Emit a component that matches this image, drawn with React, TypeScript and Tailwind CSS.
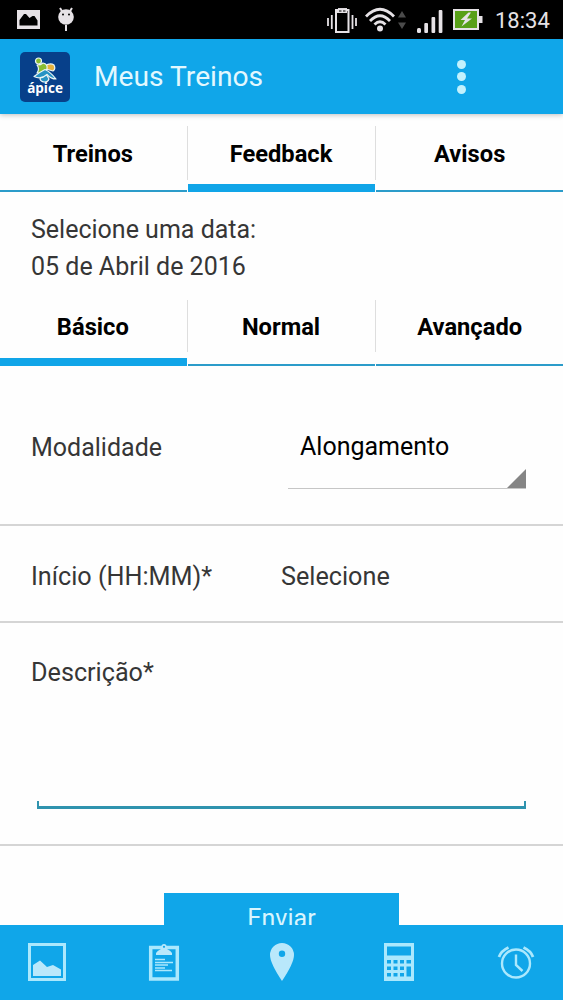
import { clsx } from "clsx";

const mainTabs = ["Treinos", "Feedback", "Avisos"];
const levelTabs = ["Básico", "Normal", "Avançado"];

const StatusBar = () => (
  <div className="flex h-[39px] shrink-0 items-center bg-black pl-[17px] text-[#e6e2e6]">
    <svg width="23" height="19" viewBox="0 0 23 19">
      <path fill="currentColor" fillRule="evenodd" d="M0 0h23v19H0zM2.500 15.500h18v-5l-3-4.500h-2l-3 2-3.500-4H7l-4.500 6z" />
    </svg>
    <svg className="ml-[17px]" width="18" height="25" viewBox="0 0 18 25">
      <circle cx="9" cy="10" r="7.800" fill="currentColor" />
      <path d="M3 1l2.500 4M15 1l-2.500 4M9 18v6" stroke="currentColor" strokeWidth="2" />
      <circle cx="6" cy="7.500" r="1" fill="#000" />
      <circle cx="12" cy="7.500" r="1" fill="#000" />
    </svg>
    <svg className="ml-auto mt-[2px]" width="30" height="26" viewBox="0 0 30 26" fill="none" stroke="currentColor">
      <rect x="9" y="2" width="12.500" height="22" strokeWidth="2" />
      <path d="M11 0.800h9" strokeWidth="1.500" />
      <path d="M10 3.500h10" strokeWidth="3" />
      <path d="M12 3h2.500M16 3h2.500" stroke="#000" strokeWidth="1" />
      <path d="M1 10v8M4.800 7v14M25.500 7v14M29 10v8" strokeWidth="1.800" />
    </svg>
    <svg className="ml-[8px]" width="30" height="26" viewBox="0 0 30 26" fill="none" stroke="currentColor" strokeWidth="2.800">
      <path d="M1 9.500Q15-5 29 9.500M5 14Q15 3.500 25 14M9.500 17.500Q15 12 20.500 17.500" />
      <circle cx="15" cy="21.500" r="3" fill="currentColor" stroke="none" />
    </svg>
    <svg className="ml-[3px]" width="8" height="18" viewBox="0 0 8 18" fill="#4b4b4b">
      <path d="M4 0l4 6.500H0zM0 11.500h8L4 18z" />
    </svg>
    <svg className="ml-[11px] mt-[3px]" width="26" height="23" viewBox="0 0 26 23" fill="currentColor">
      <rect x="0" y="18" width="4" height="5" rx="1.500" />
      <rect x="7.300" y="13" width="3.700" height="10" rx="1" />
      <rect x="14.500" y="7" width="3.700" height="16" rx="1" />
      <rect x="21.700" y="0" width="3.700" height="23" rx="1" />
    </svg>
    <svg className="ml-[10px]" width="30" height="21" viewBox="0 0 30 21">
      <rect x="1" y="1" width="24" height="19" fill="#58a018" stroke="currentColor" strokeWidth="2" />
      <rect x="26" y="7" width="3.500" height="7" fill="currentColor" />
      <path d="M15.500 3.500L7.500 11h4.500l-3.500 6.500L19 9.500h-5l4-6z" fill="currentColor" />
    </svg>
    <span className="ml-[12px] mr-[13px] mt-[3px] w-[55px] whitespace-nowrap text-[22px] leading-none">18:34</span>
  </div>
);

const Logo = () => (
  <div className="flex h-[50px] w-[50px] flex-col items-center rounded-[5px] bg-[#07408a] pt-[5px]">
    <svg className="shrink-0" width="24" height="26" viewBox="0 0 24 26" stroke="#eaf6f5" strokeWidth="1.200" strokeLinejoin="round">
      <path d="M12 9q5-3.500 9-1 2 4-1 6l-7-2z" fill="#e7b33e" />
      <path d="M4 8q4 0 6-2 5 1 4 6l-4 4H4q3-4 0-8z" fill="#88bd32" />
      <circle cx="5.500" cy="4" r="3" fill="#88bd32" />
      <path d="M7 22q1-4 6-5l3 5q-1 3-4 3-4 0-5-3z" fill="#2693c4" />
      <path d="M1 19.500q5-4 11-7 5 2 11 9.500-5 0-9-4.500-6 5.500-13 2z" fill="#2693c4" />
    </svg>
    <span className="-mt-[2px] font-['Open_Sans',sans-serif] text-[13.500px] font-bold leading-[15px] text-white">ápice</span>
  </div>
);

const Tabs = ({ items, active, compact }: { items: string[]; active: number; compact?: boolean }) => (
  <div className="flex h-[66px] shrink-0 gap-[1.500px]">
    {items.map((item, i) => (
      <button key={item} className="flex flex-1 flex-col text-[23.700px] font-bold leading-none text-black">
        <span
          className={clsx(
            "flex items-center justify-center self-stretch",
            compact ? "h-[52px] pt-[3px]" : "h-[54px] pt-1",
            i < items.length - 1 && "-mr-[1.500px] border-r-[1.500px] border-[#dedede] pr-[1.500px]",
          )}
        >
          {item}
        </span>
        <span className={clsx("mt-auto self-stretch", i === active ? "h-2 bg-[#11a5e8]" : "h-[2px] bg-[#2c9cca]")} />
      </button>
    ))}
  </div>
);

const BottomNav = () => (
  <nav className="flex h-[75px] shrink-0 items-center justify-between bg-[#10a6e9] px-7 pb-px text-[#abe8fd]">
    <svg width="38" height="38" viewBox="0 0 38 38">
      <rect x="1.500" y="1.500" width="35" height="35" fill="none" stroke="currentColor" strokeWidth="3" />
      <path d="M5 33V22l7-4.500 7 6.500 6-2 8 4.500V33z" fill="#b9e8fb" />
    </svg>
    <svg width="38" height="38" viewBox="0 0 38 38">
      <rect x="5.700" y="4.500" width="26.600" height="31.500" fill="none" stroke="currentColor" strokeWidth="3.500" />
      <path d="M11 12v-2q1-2 5-4 0-5 3-5t3 5q4 2 5 4v2z" fill="#b9e8fb" />
      <circle cx="19" cy="3.800" r="1.100" fill="#10a6e9" />
      <path d="M10 16.500h10M10 19.500h18M10 22h13M10 25h10M10 27.500h17" stroke="currentColor" strokeWidth="1.300" />
    </svg>
    <svg width="38" height="38" viewBox="0 0 38 38">
      <path d="M19 38Q7 20 7 12a12 12 0 0 1 24 0Q31 20 19 38zM19 7.500a3.200 3.200 0 1 0 0 6.400 3.200 3.200 0 0 0 0-6.400z" fill="#b9e8fb" fillRule="evenodd" />
    </svg>
    <svg width="38" height="38" viewBox="0 0 38 38">
      <path
        fill="currentColor"
        fillRule="evenodd"
        d="M4 0h30v38H4zM7 3.500v9h24v-9zM7 17v3.500h4V17zM13.500 17v3.500h4V17zM20 17v3.500h4V17zM26.500 17v3.500H31V17zM7 23.500V27h4v-3.500zM13.500 23.500V27h4v-3.500zM20 23.500V27h4v-3.500zM26.500 23.500v10H31v-10zM7 30v3.500h4V30zM13.500 30v3.500h4V30zM20 30v3.500h4V30z"
      />
    </svg>
    <svg width="38" height="38" viewBox="0 0 38 38" fill="none" stroke="currentColor" strokeWidth="2.400">
      <circle cx="19" cy="20.500" r="14" />
      <path d="M19 11.500v10.500l6.500 6" />
      <path d="M2 14q2-6 9.500-9.500M36 14q-2-6-9.500-9.500" strokeWidth="2.800" />
    </svg>
  </nav>
);

const App = () => {
  return (
    <div className="flex h-[1000px] w-[563px] flex-col overflow-hidden bg-[#fefefe] font-[Roboto,sans-serif] text-[25px] text-[#363636]">
      <StatusBar />
      <header className="flex h-[75px] shrink-0 items-center bg-[#10a6e9] pl-5 shadow-[0_1px_5px_rgba(0,0,0,0.250)]">
        <Logo />
        <h1 className="ml-6 text-[28.200px] leading-[28px] text-[#e3f8fe]">Meus Treinos</h1>
        <div className="ml-auto mr-[97px] flex flex-col gap-[3.500px]">
          <span className="h-[9px] w-[9px] rounded-full bg-[#c3f1fd]" />
          <span className="h-[9px] w-[9px] rounded-full bg-[#c3f1fd]" />
          <span className="h-[9px] w-[9px] rounded-full bg-[#c3f1fd]" />
        </div>
      </header>

      <main className="flex min-h-0 flex-1 flex-col overflow-hidden pt-3">
        <Tabs items={mainTabs} active={1} />
        <div className="mb-[15px] mt-[19px] h-[74px] shrink-0 pl-[31px] leading-[37px]">
          <p>Selecione uma data:</p>
          <p>05 de Abril de 2016</p>
        </div>
        <Tabs items={levelTabs} active={0} compact />

        <div className="flex h-[160px] shrink-0 items-center border-b-2 border-[#d5d5d5] pl-[31px] pt-[5px]">
          <label className="w-[257px]">Modalidade</label>
          <div className="mt-[17px] flex h-[66px] w-[238px] items-end justify-between border-b-[1.500px] border-[#c6c6c6] pl-3">
            <span className="self-start pt-[5px] text-black">Alongamento</span>
            <svg width="19" height="19" viewBox="0 0 19 19" fill="#858585">
              <path d="M19 0v19H0z" />
            </svg>
          </div>
        </div>
        <div className="flex h-[97px] shrink-0 items-center border-b-2 border-[#d5d5d5] pl-[31px] pt-[7px]">
          <label className="w-[250px] text-[25.200px]">Início (HH:MM)*</label>
          <span className="text-[25.200px]">Selecione</span>
        </div>
        <div className="flex h-[223px] shrink-0 flex-col border-b-2 border-[#d5d5d5] pl-[31px] pr-[37px] pt-[31px]">
          <label className="text-[25.200px]">Descrição*</label>
          <div className="mb-[35px] ml-[6px] mt-auto h-2 border-x-2 border-b-[3px] border-[#2f93ae]" />
        </div>
        <button className="mx-auto mt-[47px] h-[60px] w-[235px] shrink-0 bg-[#10a6e9] pb-[9px] text-[25px] text-[#d9f5fe]">
          Enviar
        </button>
      </main>

      <BottomNav />
    </div>
  );
};

export default App;
